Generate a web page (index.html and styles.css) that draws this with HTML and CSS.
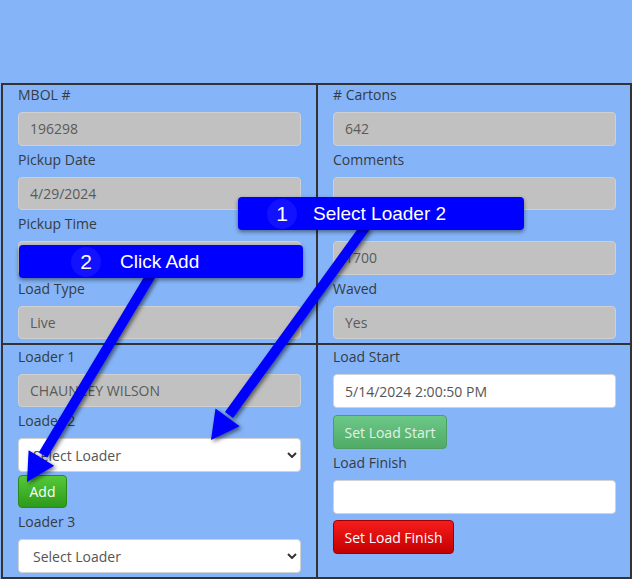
FILE: index.html
```html
<!DOCTYPE html>
<html>
<head>
<meta charset="utf-8">
<link rel="stylesheet" href="styles.css">
</head>
<body>
<div class="page">
  <div class="header"></div>
  <div class="grid">
    <div class="cell cell-left cell-top">
      <label class="lbl">MBOL #</label>
      <input class="ctrl disabled" type="text" value="196298" readonly>
      <label class="lbl">Pickup Date</label>
      <input class="ctrl disabled" type="text" value="4/29/2024" readonly>
      <label class="lbl">Pickup Time</label>
      <input class="ctrl disabled" type="text" value="10:00 AM" readonly>
      <label class="lbl">Load Type</label>
      <input class="ctrl disabled last" type="text" value="Live" readonly>
    </div>
    <div class="cell cell-right cell-top">
      <label class="lbl"># Cartons</label>
      <input class="ctrl disabled" type="text" value="642" readonly>
      <label class="lbl">Comments</label>
      <input class="ctrl disabled" type="text" value="" readonly>
      <label class="lbl">Door</label>
      <input class="ctrl disabled" type="text" value="1700" readonly>
      <label class="lbl">Waved</label>
      <input class="ctrl disabled last" type="text" value="Yes" readonly>
    </div>
    <div class="cell cell-left cell-bottom">
      <label class="lbl">Loader 1</label>
      <input class="ctrl disabled" type="text" value="CHAUNCEY WILSON" readonly>
      <label class="lbl">Loader 2</label>
      <div class="select-wrap tight">
        <select class="ctrl sel"><option>Select Loader</option></select>
        <svg class="chev" width="10" height="6" viewBox="0 0 10 6"><path d="M1 1 L5 5 L9 1" fill="none" stroke="#333" stroke-width="2"/></svg>
      </div>
      <button class="btn btn-add">Add</button>
      <label class="lbl">Loader 3</label>
      <div class="select-wrap">
        <select class="ctrl sel"><option>Select Loader</option></select>
        <svg class="chev" width="10" height="6" viewBox="0 0 10 6"><path d="M1 1 L5 5 L9 1" fill="none" stroke="#333" stroke-width="2"/></svg>
      </div>
    </div>
    <div class="cell cell-right cell-bottom">
      <label class="lbl">Load Start</label>
      <input class="ctrl white gap" type="text" value="5/14/2024 2:00:50 PM" readonly>
      <button class="btn btn-start">Set Load Start</button>
      <label class="lbl">Load Finish</label>
      <input class="ctrl white gap6" type="text" value="" readonly>
      <button class="btn btn-finish">Set Load Finish</button>
    </div>
  </div>

  <svg class="arrows" width="632" height="579" viewBox="0 0 632 579">
    <defs>
      <filter id="sh" x="-20%" y="-20%" width="140%" height="140%">
        <feDropShadow dx="2" dy="2" stdDeviation="2" flood-color="#000" flood-opacity="0.55"/>
      </filter>
    </defs>
    <g filter="url(#sh)">
      <line x1="366" y1="226" x2="229" y2="415" stroke="#0000ff" stroke-width="10"/>
      <polygon points="211,440 239.7,426.3 215.5,408.5" fill="#0000ff"/>
    </g>
    <g filter="url(#sh)">
      <line x1="151" y1="275" x2="43" y2="455" stroke="#0000ff" stroke-width="10"/>
      <polygon points="27,482 54.2,465.7 28.6,450.3" fill="#0000ff"/>
    </g>
  </svg>

  <div class="callout callout-1"><span class="num">1</span><span class="txt">Select Loader 2</span></div>
  <div class="callout callout-2"><span class="num">2</span><span class="txt">Click Add</span></div>
</div>
</body>
</html>
```

FILE: styles.css
```css
body {
  margin: 0;
  background: #85b5f8;
  font-family: "Open Sans", "DejaVu Sans", sans-serif;
  font-size: 14px;
  color: #333;
}

.page {
  position: relative;
  width: 632px;
  height: 579px;
  overflow: hidden;
}

.header {
  height: 83px;
}

.grid {
  margin-left: 1px;
  width: 631px;
  box-sizing: border-box;
  border: 2px solid #333;
  display: grid;
  grid-template-columns: 315px 312px;
  grid-template-rows: 260px 232px;
}

.cell {
  box-sizing: border-box;
  display: flex;
  flex-direction: column;
  align-items: flex-start;
}

.cell-left {
  padding: 0 15px;
  border-right: 2px solid #333;
}

.cell-right {
  padding: 0 14px 0 15px;
}

.cell-top {
  border-bottom: 2px solid #333;
}

.cell-bottom {
  padding-top: 2px;
}

.lbl {
  display: block;
  line-height: 20px;
  margin-bottom: 7px;
  color: #353b45;
}

.ctrl {
  display: block;
  width: 100%;
  height: 34px;
  box-sizing: border-box;
  border: 1px solid #d2d2d2;
  border-radius: 4px;
  padding: 0 11px;
  margin: 0 0 4px 0;
  font-family: "Open Sans", "DejaVu Sans", sans-serif;
  font-size: 14px;
  color: #555;
  background: #fff;
  outline: none;
}

.ctrl.disabled {
  background: #c1c1c1;
  border-color: #d0d0d0;
  color: #5a5a5a;
}

.ctrl.gap {
  margin-bottom: 7px;
}

.ctrl.gap6 {
  margin-bottom: 6px;
}

.select-wrap {
  position: relative;
  width: 100%;
}

.select-wrap.tight .sel {
  margin-bottom: 3px;
}

.sel {
  -webkit-appearance: none;
  appearance: none;
  padding-left: 14px;
}

.chev {
  position: absolute;
  left: 269px;
  top: 14px;
}

.btn {
  height: 34px;
  box-sizing: border-box;
  padding: 0;
  border-radius: 4px;
  border: 1px solid;
  font-family: "Open Sans", "DejaVu Sans", sans-serif;
  font-size: 14px;
  color: #fff;
  margin: 0 0 4px 0;
}

.btn-add {
  width: 49px;
  background: linear-gradient(#55c93a, #2d9a1a);
  border-color: #2a8a19;
}

.btn-start {
  width: 114px;
  background: linear-gradient(#6cc887, #50ab67);
  border-color: #4c9f60;
  color: #e3f2e6;
}

.btn-finish {
  width: 121px;
  background: linear-gradient(#f61c1c, #c40000);
  border-color: #9e0000;
}

.arrows {
  position: absolute;
  left: 0;
  top: 0;
}

.callout {
  position: absolute;
  height: 33px;
  box-sizing: border-box;
  background: #0000ff;
  border-radius: 4px;
  box-shadow: 0 2px 4px rgba(0, 0, 0, 0.45);
  color: #fff;
  font-family: "Liberation Sans", Arial, sans-serif;
  font-size: 19px;
  display: flex;
  align-items: center;
}

.callout .num {
  width: 30px;
  height: 30px;
  border-radius: 50%;
  background: rgba(255, 255, 255, 0.07);
  display: flex;
  align-items: center;
  justify-content: center;
  font-size: 21px;
}

.callout-1 {
  left: 238px;
  top: 197px;
  width: 286px;
  padding-left: 29px;
}

.callout-1 .txt {
  margin-left: 16px;
}

.callout-2 {
  left: 19px;
  top: 245px;
  width: 284px;
  padding-left: 52px;
}

.callout-2 .txt {
  margin-left: 19px;
}
```
